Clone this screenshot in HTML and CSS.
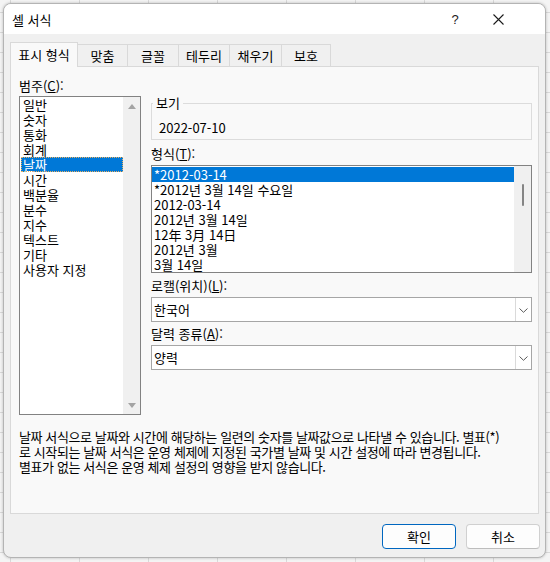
FILE: index.html
```html
<!DOCTYPE html>
<html lang="ko">
<head>
<meta charset="utf-8">
<title>셀 서식</title>
<link rel="stylesheet" href="styles.css">
</head>
<body>
<div class="window">
  <div class="titlebar">
    <span class="title">셀 서식</span>
    <span class="help">?</span>
    <span class="close">
      <svg width="11" height="11" viewBox="0 0 11 11"><path d="M0.5 0.5 L10.5 10.5 M10.5 0.5 L0.5 10.5" stroke="#1b1b1b" stroke-width="1.1" fill="none"/></svg>
    </span>
  </div>
  <div class="body">
    <div class="tabs">
      <div class="tab active t1">표시 형식</div>
      <div class="tab t2">맞춤</div>
      <div class="tab t3">글꼴</div>
      <div class="tab t4">테두리</div>
      <div class="tab t5">채우기</div>
      <div class="tab t6">보호</div>
    </div>
    <div class="panel">
      <div class="cols">
        <div class="left">
          <div class="label">범주(<u>C</u>):</div>
          <div class="listbox cat">
            <div class="items">
              <div class="item">일반</div>
              <div class="item">숫자</div>
              <div class="item">통화</div>
              <div class="item">회계</div>
              <div class="item selected focus">날짜</div>
              <div class="item">시간</div>
              <div class="item">백분율</div>
              <div class="item">분수</div>
              <div class="item">지수</div>
              <div class="item">텍스트</div>
              <div class="item">기타</div>
              <div class="item">사용자 지정</div>
            </div>
            <div class="vscroll arrows">
              <span class="arrow up"></span>
              <span class="arrow down"></span>
            </div>
          </div>
        </div>
        <div class="right">
          <fieldset class="preview">
            <legend>보기</legend>
            <div class="preview-value">2022-07-10</div>
          </fieldset>
          <div class="label gap6">형식(<u>T</u>):</div>
          <div class="listbox fmt">
            <div class="items">
              <div class="item selected">*2012-03-14</div>
              <div class="item">*2012년 3월 14일 수요일</div>
              <div class="item">2012-03-14</div>
              <div class="item">2012년 3월 14일</div>
              <div class="item">12年 3月 14日</div>
              <div class="item">2012년 3월</div>
              <div class="item">3월 14일</div>
            </div>
            <div class="vscroll thin">
              <span class="thumb"></span>
            </div>
          </div>
          <div class="label gap5">로캘(위치)(<u>L</u>):</div>
          <div class="combo">
            <span class="combo-text">한국어</span>
            <span class="combo-btn">
              <svg width="9" height="5" viewBox="0 0 9 5"><path d="M0.5 0.5 L4.5 4.3 L8.5 0.5" stroke="#5a5a5a" stroke-width="1" fill="none"/></svg>
            </span>
          </div>
          <div class="label gap4">달력 종류(<u>A</u>):</div>
          <div class="combo">
            <span class="combo-text">양력</span>
            <span class="combo-btn">
              <svg width="9" height="5" viewBox="0 0 9 5"><path d="M0.5 0.5 L4.5 4.3 L8.5 0.5" stroke="#5a5a5a" stroke-width="1" fill="none"/></svg>
            </span>
          </div>
        </div>
      </div>
      <p class="desc">날짜 서식으로 날짜와 시간에 해당하는 일련의 숫자를 날짜값으로 나타낼 수 있습니다. 별표(*)<br>로 시작되는 날짜 서식은 운영 체제에 지정된 국가별 날짜 및 시간 설정에 따라 변경됩니다.<br>별표가 없는 서식은 운영 체제 설정의 영향을 받지 않습니다.</p>
    </div>
    <div class="buttons">
      <button class="btn primary">확인</button>
      <button class="btn">취소</button>
    </div>
  </div>
</div>
</body>
</html>
```

FILE: styles.css
```css
* { box-sizing: border-box; }

html, body {
  margin: 0;
  padding: 0;
}

body {
  width: 550px;
  height: 562px;
  overflow: hidden;
  font-family: "Noto Sans CJK KR", "Noto Sans", sans-serif;
  font-size: 13px;
  color: #000;
  background-color: #f4f4f4;
  background-image:
    linear-gradient(to right, #d9d9d9 1px, transparent 1px),
    linear-gradient(to bottom, #d9d9d9 1px, transparent 1px);
  background-size: 69px 20px;
  background-position: 10px 12px;
  padding-top: 3px;
  padding-left: 3px;
}

.window {
  width: 543px;
  height: 555px;
  border: 1px solid #b4b4b4;
  border-radius: 8px;
  overflow: hidden;
  background: #f0f0f0;
  box-shadow: 0 0 3px rgba(0, 0, 0, 0.25);
  display: flex;
  flex-direction: column;
}

/* title bar */
.titlebar {
  height: 30px;
  flex: none;
  background: #fff;
  display: flex;
  align-items: center;
  padding-left: 8px;
}
.title {
  flex: 1;
  line-height: 15px;
}
.help {
  width: 20px;
  text-align: center;
  font-family: "Liberation Sans", sans-serif;
  font-size: 13px;
  margin-right: 10px;
  color: #1b1b1b;
}
.close {
  width: 46px;
  height: 30px;
  margin-right: 24px;
  display: flex;
  align-items: center;
  justify-content: center;
}
.close svg { display: block; }

/* body */
.body {
  flex: 1;
  padding: 8px 5px 0 6px;
  display: flex;
  flex-direction: column;
}

.tabs {
  height: 24px;
  display: flex;
  align-items: flex-end;
}
.tab {
  height: 22px;
  line-height: 21px;
  text-align: center;
  border: 1px solid #d9d9d9;
  border-bottom: none;
  margin-right: -1px;
  background: #f0f0f0;
  white-space: nowrap;
}
.tab.active {
  height: 25px;
  line-height: 24px;
  margin-bottom: -1px;
  background: #f9f9f9;
  position: relative;
  z-index: 1;
}
.t1 { width: 68px; }
.t2 { width: 51px; }
.t3 { width: 52px; }
.t4 { width: 52px; }
.t5 { width: 53px; }
.t6 { width: 50px; }

.panel {
  width: 529px;
  height: 448px;
  border: 1px solid #d9d9d9;
  background: #f9f9f9;
  padding: 11px 6px 0 8px;
}

.cols {
  display: flex;
  gap: 10px;
}
.left {
  width: 122px;
  flex: none;
}
.right {
  width: 381px;
  flex: none;
}

.label {
  line-height: 15px;
  height: 15px;
  white-space: nowrap;
}
.label u { text-underline-offset: 1px; }
.gap6 { margin-top: 6px; }
.gap5 { margin-top: 5px; }
.gap4 { margin-top: 4px; }

/* list boxes */
.listbox {
  display: flex;
  background: #fff;
  border: 1px solid #828282;
}
.listbox .items {
  flex: 1;
  min-width: 0;
}
.item {
  height: 15px;
  line-height: 15px;
  padding-left: 2px;
  white-space: nowrap;
}
.item.selected {
  background: #0078d7;
  color: #fff;
}
.item.focus {
  outline: 1px dotted #e8b060;
  outline-offset: -1px;
}

.cat {
  height: 319px;
  margin-top: 3px;
}
.cat .items {
  padding-left: 1px;
}
.cat .item { padding-left: 2px; }

.vscroll {
  width: 17px;
  flex: none;
  background: #f0f0f0;
}
.arrows {
  display: flex;
  flex-direction: column;
  justify-content: space-between;
  align-items: center;
  padding: 7px 0 6px 0;
}
.arrow {
  width: 0;
  height: 0;
  border-left: 4px solid transparent;
  border-right: 4px solid transparent;
}
.arrow.up { border-bottom: 5px solid #a3a3a3; }
.arrow.down { border-top: 5px solid #a3a3a3; }

.fmt {
  height: 108px;
  margin-top: 4px;
}
.fmt .items {
  padding-top: 1px;
}
.thin {
  padding: 18px 0 0 8px;
}
.thumb {
  display: block;
  width: 2px;
  height: 22px;
  background: #858585;
  border-radius: 1px;
}

/* preview group */
.preview {
  margin: 18px 0 0 0;
  padding: 0 0 4px 1px;
  border: 1px solid #dcdcdc;
  min-width: 0;
}
.preview legend {
  padding: 0 3px;
  line-height: 14px;
  height: 14px;
}
.preview-value {
  margin: 10px 0 0 6px;
  line-height: 15px;
  height: 15px;
}

/* combo boxes */
.combo {
  height: 25px;
  margin-top: 4px;
  display: flex;
  background: #fff;
  border: 1px solid #a6a6a6;
}
.combo-text {
  flex: 1;
  line-height: 23px;
  padding-left: 2px;
}
.combo-btn {
  width: 16px;
  flex: none;
  border-left: 1px solid #dadada;
  display: flex;
  align-items: center;
  justify-content: center;
  padding-top: 1px;
}
.combo-btn svg { display: block; }

/* description */
.desc {
  margin: 14px 0 0 0;
  line-height: 15px;
  letter-spacing: -0.4px;
  white-space: nowrap;
}

/* buttons */
.buttons {
  margin-top: 10px;
  display: flex;
  justify-content: flex-end;
  gap: 10px;
}
.btn {
  width: 74px;
  height: 25px;
  font-family: inherit;
  font-size: 13px;
  color: #000;
  background: #fdfdfd;
  border: 1px solid #d0d0d0;
  border-bottom-color: #bdbdbd;
  border-radius: 4px;
  padding: 0;
  line-height: 23px;
}
.btn.primary {
  border: 1px solid #0067c0;
}
```
